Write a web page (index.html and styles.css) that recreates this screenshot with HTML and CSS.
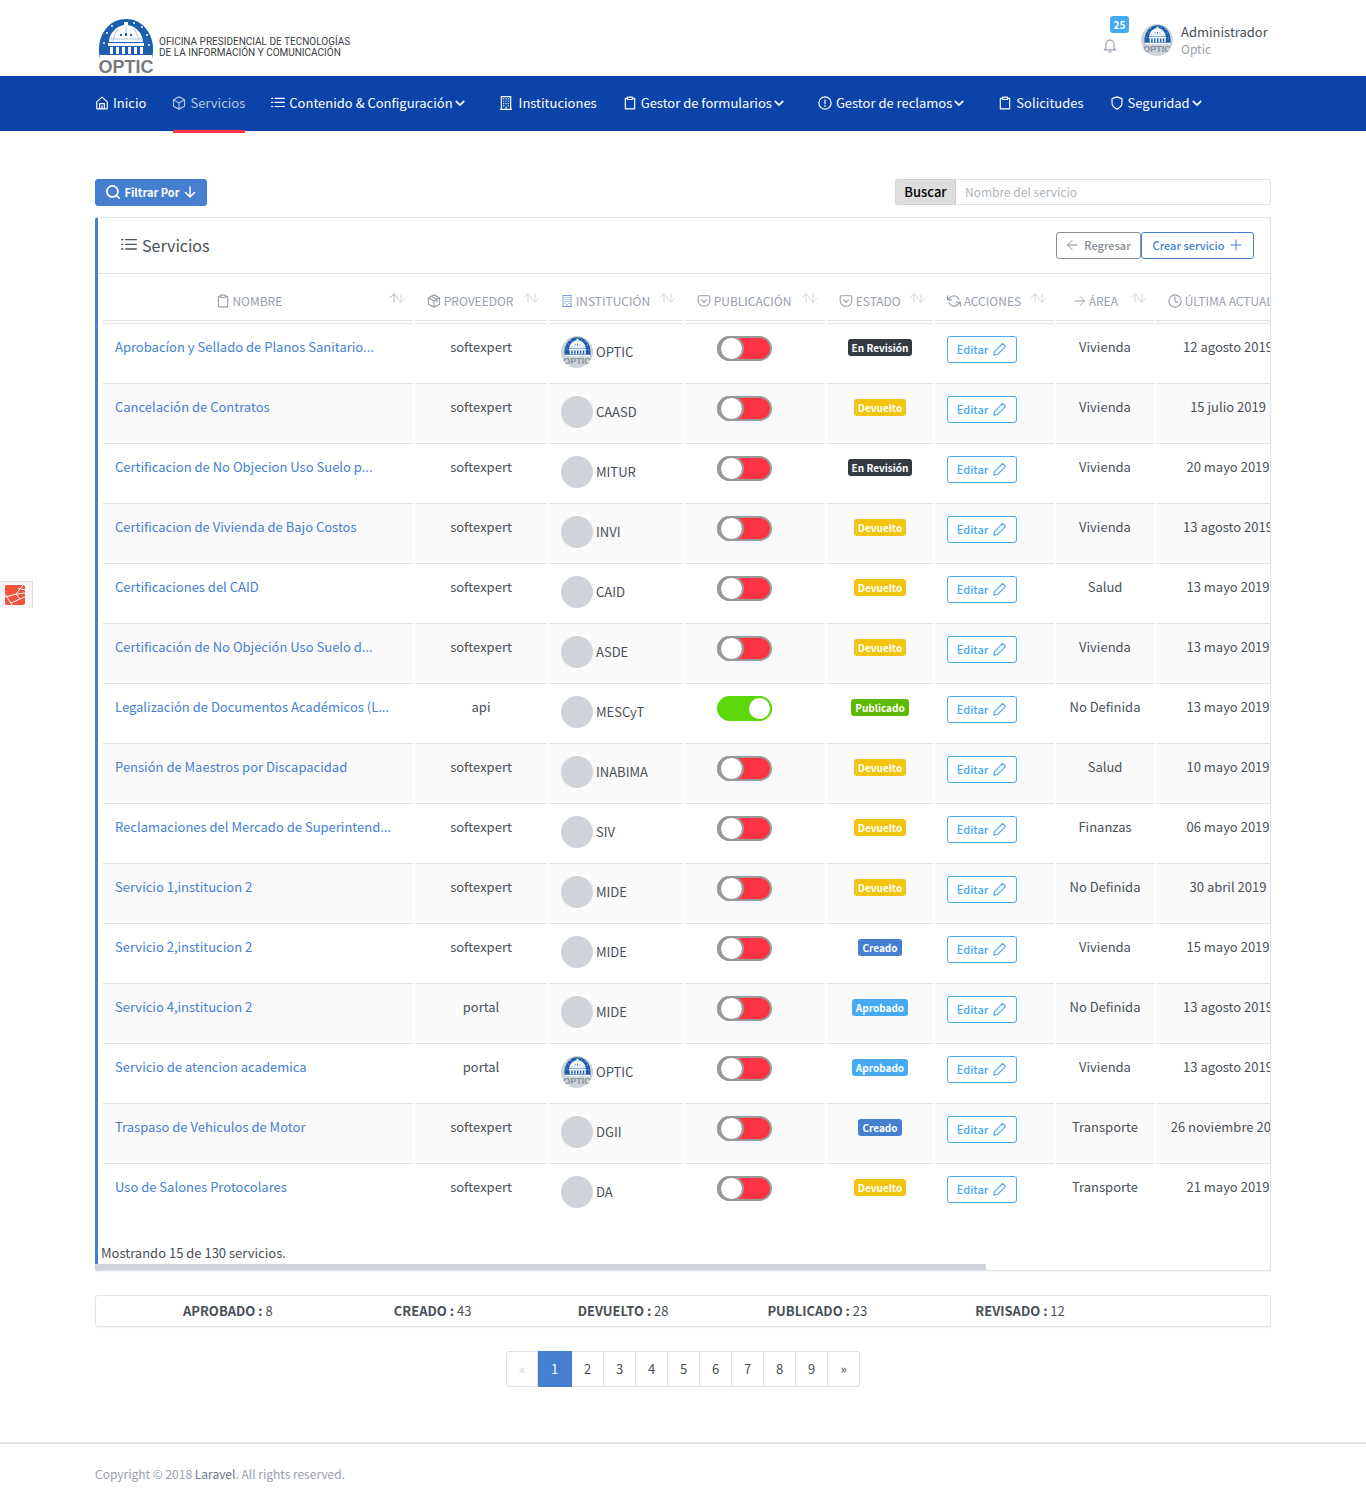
FILE: index.html
```html
<!DOCTYPE html>
<html lang="es">
<head>
<meta charset="utf-8">
<meta name="viewport" content="width=device-width, initial-scale=1">
<title>Servicios - OPTIC</title>
<link rel="stylesheet" href="styles.css">
</head>
<body>
<svg class="sprite" aria-hidden="true">
  <symbol id="home" viewBox="0 0 24 24"><path d="M3 10l9-8 9 8v12H3zM8 22v-9h8v9M12 22v-5"/></symbol>
  <symbol id="box" viewBox="0 0 24 24"><path d="M12 1.500l9.500 5v11l-9.500 5-9.500-5v-11zM2.500 6.500l9.500 5.500 9.500-5.500M12 12v10.500"/></symbol>
  <symbol id="package" viewBox="0 0 24 24"><path d="M12 1.500l9.500 5v11l-9.500 5-9.500-5v-11zM2.500 6.500l9.500 5.500 9.500-5.500M12 12v10.500M7 4l10 5.500v4"/></symbol>
  <symbol id="list" viewBox="0 0 24 24"><path d="M7 4h16M7 11h16M7 18h16M1 4h2M1 11h2M1 18h2"/></symbol>
  <symbol id="building" viewBox="0 0 24 24"><path d="M3 1h18M4 1v22M20 1v22M2 23h20M7 5h2m2 0h2m2 0h2M7 9h2m2 0h2m2 0h2M7 13h2m2 0h2m2 0h2M7 17h2m6 0h2M12 23v-5"/></symbol>
  <symbol id="clipboard" viewBox="0 0 24 24"><path d="M16 4h4v18H4V4h4M8 2h8v4H8z"/></symbol>
  <symbol id="alert" viewBox="0 0 24 24"><circle cx="12" cy="12" r="10.500"/><path d="M12 6.500v6.500M12 16v2"/></symbol>
  <symbol id="shield" viewBox="0 0 24 24"><path d="M12 22.500s8.500-4 8.500-10.500V4.500L12 1.500l-8.500 3V12c0 6.500 8.500 10.500 8.500 10.500z"/></symbol>
  <symbol id="chevron" viewBox="0 0 24 24"><path d="M3 8l9 9 9-9"/></symbol>
  <symbol id="search" viewBox="0 0 24 24"><circle cx="11" cy="11" r="9.500"/><path d="M18 18l4.500 4.500"/></symbol>
  <symbol id="down" viewBox="0 0 24 24"><path d="M12 2v20M3 13l9 9 9-9"/></symbol>
  <symbol id="up" viewBox="0 0 24 24"><path d="M12 22V2M3 11l9-9 9 9"/></symbol>
  <symbol id="left" viewBox="0 0 24 24"><path d="M22 12H3M12 3l-9 9 9 9"/></symbol>
  <symbol id="right" viewBox="0 0 24 24"><path d="M2 12h19M12 3l9 9-9 9"/></symbol>
  <symbol id="plus" viewBox="0 0 24 24"><path d="M12 2v20M2 12h20"/></symbol>
  <symbol id="pocket" viewBox="0 0 24 24"><path d="M4 3h16a2 2 0 012 2v6a10 10 0 01-20 0V5a2 2 0 012-2zM7.500 10l4.500 4.500 4.500-4.500"/></symbol>
  <symbol id="refresh" viewBox="0 0 24 24"><path d="M1 3v7h7M23 21v-7h-7M20.500 9A9 9 0 006 5.500L1 10M23 14l-5 4.500A9 9 0 013.500 15"/></symbol>
  <symbol id="clock" viewBox="0 0 24 24"><circle cx="12" cy="12" r="10.500"/><path d="M12 5v7.500l4.500 2.500"/></symbol>
  <symbol id="edit" viewBox="0 0 24 24"><path d="M16.500 2.500l5 5L7.500 21.500 1.500 22.500l1-6z"/></symbol>
  <symbol id="bell" viewBox="0 0 24 24"><path d="M22 18.500H2c2 0 3-2 3-4V9a7 7 0 0114 0v5.500c0 2 1 4 3 4zM10 22h4"/></symbol>
  <symbol id="dome" viewBox="0 0 56 40">
    <path fill="#1d5fae" d="M2 40C-3 18 10 0 28 0s31 18 26 40z"/>
    <g fill="#fff">
      <path d="M26 3h4v3c8 1 15 9 15 17H11C11 15 18 7 26 6z"/>
      <path d="M10 24h36v3H10zM12 28h3v7h-3zM18 28h3v7h-3zM24 28h3v7h-3zM30 28h3v7h-3zM36 28h3v7h-3zM42 28h3v7h-3zM2 36h52v4H2z"/>
      <circle cx="9" cy="14" r="1"/><circle cx="14" cy="7" r="1"/><circle cx="44" cy="8" r="1"/><circle cx="49" cy="16" r="1"/><circle cx="6" cy="24" r="1"/><circle cx="51" cy="26" r="1"/><circle cx="36" cy="4" r="1"/>
    </g>
    <path fill="none" stroke="#a9c5e6" d="M28 7v7M20 10q-4 5-5 12M36 10q4 5 5 12M12 20h32"/>
    <path fill="#1d5fae" d="M22 15h2v2h-2zM27 14h2v3h-2zM32 15h2v2h-2z"/>
  </symbol>
</svg>

<header class="header">
  <div class="container header-row">
    <a class="brand" href="#">
      <span class="brand-mark"><svg class="brand-dome"><use href="#dome"/></svg><span class="brand-name">OPTIC</span></span>
      <span class="brand-text">OFICINA PRESIDENCIAL DE TECNOLOGÍAS<br>DE LA INFORMACIÓN Y COMUNICACIÓN</span>
    </a>
    <div class="account">
      <button class="bell" aria-label="Notificaciones"><span class="bell-count">25</span><svg class="icon"><use href="#bell"/></svg></button>
      <a class="user" href="#">
        <span class="avatar"><svg class="avatar-dome"><use href="#dome"/></svg><span>OPTIC</span></span>
        <span class="user-text"><span class="user-name">Administrador</span><span class="user-org">Optic</span></span>
      </a>
    </div>
  </div>
</header>

<nav class="nav">
  <div class="container nav-row">
    <a class="nav-link" href="#"><svg class="icon"><use href="#home"/></svg>Inicio</a>
    <a class="nav-link active" href="#"><svg class="icon"><use href="#box"/></svg>Servicios</a>
    <a class="nav-link menu" href="#"><svg class="icon"><use href="#list"/></svg>Contenido &amp; Configuración<svg class="chevron"><use href="#chevron"/></svg></a>
    <a class="nav-link roomy" href="#"><svg class="icon building"><use href="#building"/></svg>Instituciones</a>
    <a class="nav-link menu" href="#"><svg class="icon"><use href="#clipboard"/></svg>Gestor de formularios<svg class="chevron"><use href="#chevron"/></svg></a>
    <a class="nav-link menu" href="#"><svg class="icon"><use href="#alert"/></svg>Gestor de reclamos<svg class="chevron"><use href="#chevron"/></svg></a>
    <a class="nav-link" href="#"><svg class="icon"><use href="#clipboard"/></svg>Solicitudes</a>
    <a class="nav-link menu" href="#"><svg class="icon"><use href="#shield"/></svg>Seguridad<svg class="chevron"><use href="#chevron"/></svg></a>
  </div>
</nav>

<main class="container main">
  <div class="toolbar">
    <button class="btn btn-primary"><svg class="icon"><use href="#search"/></svg>Filtrar Por<svg class="icon small"><use href="#down"/></svg></button>
    <form class="search">
      <label class="search-label" for="q">Buscar</label>
      <input class="search-input" id="q" type="text" placeholder="Nombre del servicio">
    </form>
  </div>

  <section class="card services">
    <div class="card-header">
      <h1 class="card-title"><svg class="icon title-icon"><use href="#list"/></svg>Servicios</h1>
      <div class="card-actions">
        <button class="btn btn-secondary"><svg class="icon small"><use href="#left"/></svg>Regresar</button><button class="btn btn-outline">Crear servicio<svg class="icon small"><use href="#plus"/></svg></button>
      </div>
    </div>
    <div class="table-wrap">
      <table class="table">
        <colgroup><col class="c-name"><col class="c-prov"><col class="c-inst"><col class="c-pub"><col class="c-state"><col class="c-act"><col class="c-area"><col class="c-date"></colgroup>
        <thead>
          <tr>
            <th><svg class="icon"><use href="#clipboard"/></svg> NOMBRE<span class="sort asc"><svg><use href="#up"/></svg><svg><use href="#down"/></svg></span></th>
            <th><svg class="icon"><use href="#package"/></svg> PROVEEDOR<span class="sort"><svg><use href="#up"/></svg><svg><use href="#down"/></svg></span></th>
            <th><svg class="icon building tint"><use href="#building"/></svg> INSTITUCIÓN<span class="sort"><svg><use href="#up"/></svg><svg><use href="#down"/></svg></span></th>
            <th><svg class="icon"><use href="#pocket"/></svg> PUBLICACIÓN<span class="sort"><svg><use href="#up"/></svg><svg><use href="#down"/></svg></span></th>
            <th><svg class="icon"><use href="#pocket"/></svg> ESTADO<span class="sort"><svg><use href="#up"/></svg><svg><use href="#down"/></svg></span></th>
            <th><svg class="icon"><use href="#refresh"/></svg> ACCIONES<span class="sort"><svg><use href="#up"/></svg><svg><use href="#down"/></svg></span></th>
            <th><svg class="icon small"><use href="#right"/></svg> ÁREA<span class="sort"><svg><use href="#up"/></svg><svg><use href="#down"/></svg></span></th>
            <th class="long"><svg class="icon"><use href="#clock"/></svg> ÚLTIMA ACTUALIZACIÓN</th>
          </tr>
        </thead>
        <tbody>
          <tr><td><a href="#">Aprobacíon y Sellado de Planos Sanitario...</a></td><td>softexpert</td><td><span class="inst"><span class="avatar"><svg class="avatar-dome"><use href="#dome"/></svg><span>OPTIC</span></span>OPTIC</span></td><td><input class="switch" type="checkbox" aria-label="Publicar"></td><td><span class="badge dark">En Revisión</span></td><td><button class="btn btn-edit">Editar<svg class="icon"><use href="#edit"/></svg></button></td><td>Vivienda</td><td>12 agosto 2019</td></tr>
          <tr><td><a href="#">Cancelación de Contratos</a></td><td>softexpert</td><td><span class="inst"><span class="avatar"></span>CAASD</span></td><td><input class="switch" type="checkbox" aria-label="Publicar"></td><td><span class="badge yellow">Devuelto</span></td><td><button class="btn btn-edit">Editar<svg class="icon"><use href="#edit"/></svg></button></td><td>Vivienda</td><td>15 julio 2019</td></tr>
          <tr><td><a href="#">Certificacion de No Objecion Uso Suelo p...</a></td><td>softexpert</td><td><span class="inst"><span class="avatar"></span>MITUR</span></td><td><input class="switch" type="checkbox" aria-label="Publicar"></td><td><span class="badge dark">En Revisión</span></td><td><button class="btn btn-edit">Editar<svg class="icon"><use href="#edit"/></svg></button></td><td>Vivienda</td><td>20 mayo 2019</td></tr>
          <tr><td><a href="#">Certificacion de Vivienda de Bajo Costos</a></td><td>softexpert</td><td><span class="inst"><span class="avatar"></span>INVI</span></td><td><input class="switch" type="checkbox" aria-label="Publicar"></td><td><span class="badge yellow">Devuelto</span></td><td><button class="btn btn-edit">Editar<svg class="icon"><use href="#edit"/></svg></button></td><td>Vivienda</td><td>13 agosto 2019</td></tr>
          <tr><td><a href="#">Certificaciones del CAID</a></td><td>softexpert</td><td><span class="inst"><span class="avatar"></span>CAID</span></td><td><input class="switch" type="checkbox" aria-label="Publicar"></td><td><span class="badge yellow">Devuelto</span></td><td><button class="btn btn-edit">Editar<svg class="icon"><use href="#edit"/></svg></button></td><td>Salud</td><td>13 mayo 2019</td></tr>
          <tr><td><a href="#">Certificación de No Objeción Uso Suelo d...</a></td><td>softexpert</td><td><span class="inst"><span class="avatar"></span>ASDE</span></td><td><input class="switch" type="checkbox" aria-label="Publicar"></td><td><span class="badge yellow">Devuelto</span></td><td><button class="btn btn-edit">Editar<svg class="icon"><use href="#edit"/></svg></button></td><td>Vivienda</td><td>13 mayo 2019</td></tr>
          <tr><td><a href="#">Legalización de Documentos Académicos (L...</a></td><td>api</td><td><span class="inst"><span class="avatar"></span>MESCyT</span></td><td><input class="switch" type="checkbox" aria-label="Publicar" checked></td><td><span class="badge green">Publicado</span></td><td><button class="btn btn-edit">Editar<svg class="icon"><use href="#edit"/></svg></button></td><td>No Definida</td><td>13 mayo 2019</td></tr>
          <tr><td><a href="#">Pensión de Maestros por Discapacidad</a></td><td>softexpert</td><td><span class="inst"><span class="avatar"></span>INABIMA</span></td><td><input class="switch" type="checkbox" aria-label="Publicar"></td><td><span class="badge yellow">Devuelto</span></td><td><button class="btn btn-edit">Editar<svg class="icon"><use href="#edit"/></svg></button></td><td>Salud</td><td>10 mayo 2019</td></tr>
          <tr><td><a href="#">Reclamaciones del Mercado de Superintend...</a></td><td>softexpert</td><td><span class="inst"><span class="avatar"></span>SIV</span></td><td><input class="switch" type="checkbox" aria-label="Publicar"></td><td><span class="badge yellow">Devuelto</span></td><td><button class="btn btn-edit">Editar<svg class="icon"><use href="#edit"/></svg></button></td><td>Finanzas</td><td>06 mayo 2019</td></tr>
          <tr><td><a href="#">Servicio 1,institucion 2</a></td><td>softexpert</td><td><span class="inst"><span class="avatar"></span>MIDE</span></td><td><input class="switch" type="checkbox" aria-label="Publicar"></td><td><span class="badge yellow">Devuelto</span></td><td><button class="btn btn-edit">Editar<svg class="icon"><use href="#edit"/></svg></button></td><td>No Definida</td><td>30 abril 2019</td></tr>
          <tr><td><a href="#">Servicio 2,institucion 2</a></td><td>softexpert</td><td><span class="inst"><span class="avatar"></span>MIDE</span></td><td><input class="switch" type="checkbox" aria-label="Publicar"></td><td><span class="badge blue">Creado</span></td><td><button class="btn btn-edit">Editar<svg class="icon"><use href="#edit"/></svg></button></td><td>Vivienda</td><td>15 mayo 2019</td></tr>
          <tr><td><a href="#">Servicio 4,institucion 2</a></td><td>portal</td><td><span class="inst"><span class="avatar"></span>MIDE</span></td><td><input class="switch" type="checkbox" aria-label="Publicar"></td><td><span class="badge azure">Aprobado</span></td><td><button class="btn btn-edit">Editar<svg class="icon"><use href="#edit"/></svg></button></td><td>No Definida</td><td>13 agosto 2019</td></tr>
          <tr><td><a href="#">Servicio de atencion academica</a></td><td>portal</td><td><span class="inst"><span class="avatar"><svg class="avatar-dome"><use href="#dome"/></svg><span>OPTIC</span></span>OPTIC</span></td><td><input class="switch" type="checkbox" aria-label="Publicar"></td><td><span class="badge azure">Aprobado</span></td><td><button class="btn btn-edit">Editar<svg class="icon"><use href="#edit"/></svg></button></td><td>Vivienda</td><td>13 agosto 2019</td></tr>
          <tr><td><a href="#">Traspaso de Vehiculos de Motor</a></td><td>softexpert</td><td><span class="inst"><span class="avatar"></span>DGII</span></td><td><input class="switch" type="checkbox" aria-label="Publicar"></td><td><span class="badge blue">Creado</span></td><td><button class="btn btn-edit">Editar<svg class="icon"><use href="#edit"/></svg></button></td><td>Transporte</td><td>26 noviembre 2019</td></tr>
          <tr><td><a href="#">Uso de Salones Protocolares</a></td><td>softexpert</td><td><span class="inst"><span class="avatar"></span>DA</span></td><td><input class="switch" type="checkbox" aria-label="Publicar"></td><td><span class="badge yellow">Devuelto</span></td><td><button class="btn btn-edit">Editar<svg class="icon"><use href="#edit"/></svg></button></td><td>Transporte</td><td>21 mayo 2019</td></tr>
        </tbody>
      </table>
      <p class="table-info">Mostrando 15 de 130 servicios.</p>
    </div>
    <div class="scroll-thumb"></div>
  </section>

  <section class="card totals">
    <span><b>APROBADO :</b> 8</span>
    <span><b>CREADO :</b> 43</span>
    <span><b>DEVUELTO :</b> 28</span>
    <span><b>PUBLICADO :</b> 23</span>
    <span><b>REVISADO :</b> 12</span>
  </section>

  <nav class="pagination" aria-label="Páginas">
    <a class="page disabled" href="#">«</a><a class="page current" href="#">1</a><a class="page" href="#">2</a><a class="page" href="#">3</a><a class="page" href="#">4</a><a class="page" href="#">5</a><a class="page" href="#">6</a><a class="page" href="#">7</a><a class="page" href="#">8</a><a class="page" href="#">9</a><a class="page" href="#">»</a>
  </nav>
</main>

<footer class="footer">
  <div class="container">Copyright © 2018 <a href="#">Laravel</a>. All rights reserved.</div>
</footer>

<button class="debugbar" aria-label="Debugbar">
  <svg class="debugbar-logo" viewBox="0 0 20 20"><path fill="#f4513a" d="M2 0h16q2 0 2 2v16q0 2-2 2H2q-2 0-2-2V2q0-2 2-2z"/><path fill="none" stroke="#fff" d="M0 9l7 11M0 12l12-3 8-1M18 0l-7 9 4 5 5-2M13 3l7 2M6 18l9-4"/></svg>
</button>
</body>
</html>
```

FILE: styles.css
```css
*, *::before, *::after { box-sizing: border-box; }

body {
  margin: 0;
  background: #fff;
  color: #495057;
  font-family: "Noto Sans CJK JP", "Noto Sans", sans-serif;
  font-size: 13px;
  line-height: 22px;
}

a { color: #467fcf; text-decoration: none; }
button, input { font: inherit; }
button { cursor: pointer; }

.sprite { position: absolute; width: 0; height: 0; }

.container {
  max-width: 1200px;
  margin: 0 auto;
  padding: 0 12px;
}

.icon, .chevron, .sort svg {
  width: 14px;
  height: 14px;
  flex: none;
  fill: none;
  stroke: currentColor;
  stroke-width: 2;
  stroke-linecap: round;
  stroke-linejoin: round;
}
.icon.small { width: 12px; height: 12px; }
.building { stroke-linecap: butt; }
.chevron { width: 10px; height: 10px; stroke-width: 4; }

/* Header */
.header-row {
  display: flex;
  justify-content: space-between;
  height: 76px;
}
.brand { display: flex; align-items: center; gap: 5px; padding: 18px 0 0 3px; }
.brand-mark { display: flex; flex-direction: column; align-items: center; width: 56px; }
.brand-dome { width: 56px; height: 40px; }
.brand-name {
  color: #77787b;
  font: bold 18px/16px "Liberation Sans", sans-serif;
}
.brand-text {
  color: #3c3c3e;
  font: 400 10px/11px Roboto, sans-serif;
  white-space: nowrap;
}
.account { display: flex; align-items: center; gap: 24px; padding-top: 4px; }
.bell {
  position: relative;
  width: 14px;
  height: 14px;
  padding: 0;
  border: 0;
  background: none;
  color: #9aa0ac;
  display: flex;
  margin-top: 12px;
}
.bell-count {
  position: absolute;
  left: 7px;
  bottom: 20px;
  width: 19px;
  border-radius: 3px;
  background: #45aaf2;
  color: #fff;
  font-size: 10px;
  font-weight: 700;
  line-height: 17px;
  text-align: center;
}
.user { display: flex; align-items: center; gap: 8px; }
.user-text { display: flex; flex-direction: column; min-width: 90px; }
.user-name { color: #495057; line-height: 18px; }
.user-org { color: #9aa0ac; font-size: 12px; line-height: 16px; }

.avatar {
  display: flex;
  flex-direction: column;
  align-items: center;
  width: 32px;
  height: 32px;
  flex: none;
  overflow: hidden;
  border-radius: 50%;
  background: #ced4da;
  color: #868e96;
  font: bold 9px/8px "Liberation Sans", sans-serif;
}
.avatar-dome { width: 27px; height: 20px; margin-top: 1px; flex: none; }

/* Main navigation */
.nav { background: #0b43a8; }
.nav-row { display: flex; gap: 26px; }
.nav-link {
  display: flex;
  align-items: center;
  gap: 4px;
  height: 55px;
  padding-bottom: 2px;
  color: #fff;
  white-space: nowrap;
}
.nav-link.active {
  position: relative;
  color: #b6c7e5;
}
.nav-link.active::after {
  content: "";
  position: absolute;
  left: 1px;
  right: 0;
  bottom: -2px;
  height: 3px;
  border-radius: 1px;
  background: #ff3344;
}
.nav-link.menu { padding-right: 8px; }
.nav-link.roomy { gap: 6px; }
.nav-link .chevron { margin-left: -2px; }

/* Toolbar */
.main { padding-top: 48px; padding-bottom: 55px; }
.toolbar {
  display: flex;
  justify-content: space-between;
  align-items: flex-start;
  height: 27px;
}
.btn {
  display: inline-flex;
  align-items: center;
  justify-content: center;
  gap: 5px;
  height: 27px;
  padding: 0 7px 2px;
  border: 1px solid;
  border-radius: 3px;
  background: #fff;
  font-size: 11px;
  font-weight: 500;
  white-space: nowrap;
}
.btn-primary {
  width: 112px;
  border-color: #467fcf;
  background: #467fcf;
  color: #fff;
  font-weight: 700;
}
.btn-primary .icon { stroke-width: 3; }
.btn-secondary { width: 85px; color: #868e96; }
.btn-outline { width: 113px; color: #467fcf; }
.btn-edit { width: 70px; color: #45aaf2; }
.search { display: flex; width: 376px; height: 26px; }
.search-label {
  width: 61px;
  border: 1px solid #ced0d4;
  border-radius: 3px 0 0 3px;
  background: #ddd;
  color: #000;
  font-weight: 500;
  line-height: 24px;
  text-align: center;
}
.search-input {
  flex: 1;
  min-width: 0;
  padding: 0 9px;
  border: 1px solid #dfe4ec;
  border-left: 0;
  border-radius: 0 3px 3px 0;
  color: #495057;
  font-size: 12px;
}
.search-input::placeholder { color: #adb5bd; }

/* Services card */
.card {
  border: 1px solid #dfe3ea;
  border-radius: 3px;
  box-shadow: 0 1px 2px rgba(0, 0, 0, .05);
}
.services { position: relative; margin-top: 11px; border-left: 3px solid #467fcf; }
.card-header {
  display: flex;
  align-items: center;
  justify-content: space-between;
  height: 56px;
  padding: 0 16px 0 23px;
  border-bottom: 1px solid #dfe3ea;
}
.card-title {
  display: flex;
  align-items: center;
  gap: 5px;
  margin: 0;
  padding-bottom: 2px;
  font-size: 16px;
  font-weight: 400;
}
.title-icon { width: 16px; height: 16px; }
.card-actions { display: flex; }
.card-actions .btn { gap: 6px; }

.table-wrap { padding: 0 0 6px 3px; overflow-x: auto; scrollbar-width: none; }
.table {
  width: 1201px;
  table-layout: fixed;
  border-collapse: separate;
  border-spacing: 2px;
}
.c-name { width: 310px; }
.c-prov { width: 132px; }
.c-inst { width: 134px; }
.c-pub { width: 140px; }
.c-state { width: 106px; }
.c-act { width: 119px; }
.c-area { width: 98px; }
.c-date { width: 144px; }
.table th {
  position: relative;
  height: 45px;
  padding: 5px 30px 0 12px;
  border-bottom: 1px solid #dee2e6;
  color: #9aa0ac;
  font-size: 12px;
  font-weight: 400;
  white-space: nowrap;
}
.table th:not(:first-child) { text-align: left; }
.table th .icon { vertical-align: -2px; }
.table th .small { vertical-align: -1px; }
.table th:nth-child(7) { padding-left: 18px; }
.table th .building { width: 12px; }
.table th.long { padding-right: 0; }
.tint { color: #7d9fdc; }
.sort {
  position: absolute;
  right: 7px;
  top: 17px;
  display: flex;
  opacity: .5;
}
.sort svg { width: 10px; height: 10px; margin-left: -3px; }
.sort.asc { opacity: 1; }
.sort.asc svg + svg { opacity: .5; }
.table td {
  height: 58px;
  padding: 12px 12px 0;
  border-top: 1px solid #dee2e6;
  text-align: center;
  vertical-align: top;
  white-space: nowrap;
}
.table td:first-child { text-align: left; }
.table td:nth-child(4) { padding-right: 32px; padding-left: 32px; }
.table tbody tr:nth-child(even) td { background: #fafafa; }
.table .btn { display: flex; }
.inst { display: flex; align-items: center; gap: 3px; }

.switch {
  position: relative;
  display: block;
  appearance: none;
  width: 55px;
  height: 25px;
  margin: 0;
  border: 2px solid #999;
  border-radius: 13px;
  background: #ff3344;
}
.switch::before {
  content: "";
  position: absolute;
  top: -2px;
  left: 0;
  width: 25px;
  height: 25px;
  border: 2px solid #999;
  border-radius: 50%;
  background: #fff;
  box-shadow: -2px 0 0 #999;
}
.switch:checked { border-color: #5cd80a; background: #5cd80a; }
.switch:checked::before {
  left: auto;
  right: -2px;
  border-color: #5cd80a;
  box-shadow: none;
}

.badge {
  display: inline-block;
  margin-top: 1px;
  padding: 0 4px;
  border-radius: 3px;
  color: #fff;
  font-size: 10px;
  font-weight: 700;
  line-height: 17px;
}
.dark { background: #343a40; }
.yellow { background: #f1c40f; }
.green { background: #5eba00; }
.blue { background: #467fcf; }
.azure { background: #45aaf2; }

.table-info { margin: 19px 0 0; }
.scroll-thumb {
  position: absolute;
  left: -3px;
  bottom: 0;
  width: 76%;
  height: 6px;
  background: #ced4da;
}

/* Totals and pagination */
.totals {
  display: grid;
  grid-template-columns: 211fr 184fr 190fr 208fr 295fr;
  margin-top: 24px;
  padding: 4px 0 4px 87px;
}
.pagination {
  display: flex;
  justify-content: center;
  margin-top: 24px;
}
.page {
  min-width: 32px;
  height: 36px;
  padding: 6px 0;
  border: 1px solid #dee2e6;
  border-left: 0;
  color: #495057;
  text-align: center;
}
.page:first-child { border-left: 1px solid #dee2e6; border-radius: 3px 0 0 3px; }
.page:last-child { border-radius: 0 3px 3px 0; }
.page.disabled { color: #ced4da; }
.page.current { min-width: 34px; border-color: #467fcf; background: #467fcf; color: #fff; }

.footer {
  padding: 19px 0 20px;
  border-top: 2px solid #dfe3ea;
  color: #9aa0ac;
  font-size: 12px;
}
.footer a { color: #6e7687; }

.debugbar {
  position: fixed;
  left: 0;
  top: 581px;
  display: flex;
  width: 33px;
  height: 27px;
  padding: 3px 5px;
  border: 1px solid #ddd;
  border-width: 1px 1px 0 0;
  background: #f5f5f5;
}
.debugbar-logo { width: 20px; height: 20px; }
```
